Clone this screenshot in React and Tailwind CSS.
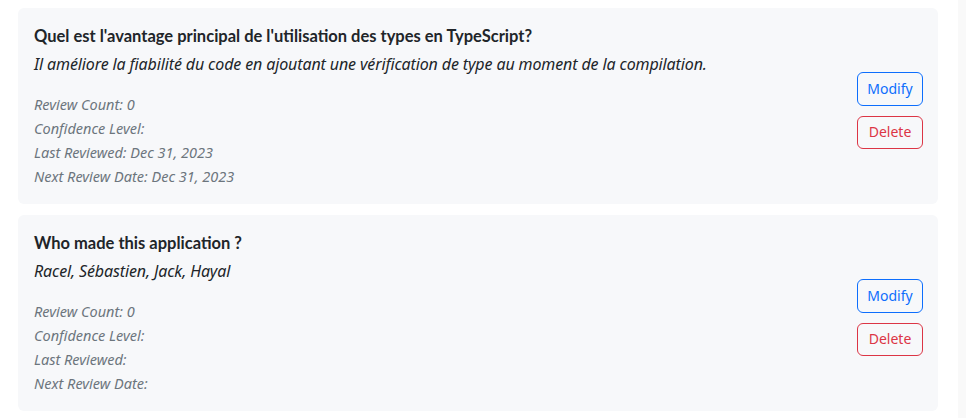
const cards = [
  {
    question: "Quel est l'avantage principal de l'utilisation des types en TypeScript?",
    answer: "Il améliore la fiabilité du code en ajoutant une vérification de type au moment de la compilation.",
    reviewCount: 0,
    confidence: "",
    lastReviewed: "Dec 31, 2023",
    nextReview: "Dec 31, 2023",
  },
  {
    question: "Who made this application ?",
    answer: "Racel, Sébastien, Jack, Hayal",
    reviewCount: 0,
    confidence: "",
    lastReviewed: "",
    nextReview: "",
  },
]

function Card({ card }) {
  return (
    <div className="flex items-center justify-between bg-[#f7f8fa] rounded-md pl-4 pr-[15px] pt-4 pb-4">
      <div className="flex flex-col">
        <h3 className="font-['Lato',sans-serif] text-[16.5px] leading-6 font-bold text-[#212529]">{card.question}</h3>
        <p className="mt-1 text-base leading-6 italic tracking-[-0.12px] text-[#212529]">{card.answer}</p>
        <div className="mt-4 flex flex-col text-[14.5px] leading-6 italic text-[#6c757d]">
          <span>Review Count: {card.reviewCount}</span>
          <span>Confidence Level: {card.confidence}</span>
          <span>Last Reviewed: {card.lastReviewed}</span>
          <span>Next Review Date: {card.nextReview}</span>
        </div>
      </div>
      <div className="flex flex-col gap-[10px] mt-2">
        <button className="w-[66px] h-[34px] rounded-md border border-[#0d6efd] text-[#0d6efd] text-sm">Modify</button>
        <button className="w-[66px] h-[33px] rounded-md border border-[#dc3545] text-[#dc3545] text-sm">Delete</button>
      </div>
    </div>
  )
}

export default function App() {
  return (
    <div className="flex w-[966px] h-[418px] bg-white font-['Noto_Sans',sans-serif] overflow-hidden">
      <div className="flex-1 flex flex-col gap-[11px] pt-2 pl-[18px] pr-5">
        {cards.map((c, i) => (
          <Card key={i} card={c} />
        ))}
      </div>
      <div className="w-2 bg-[#f9f9f9]" />
    </div>
  )
}
